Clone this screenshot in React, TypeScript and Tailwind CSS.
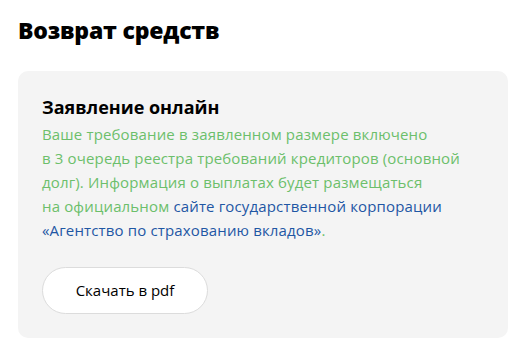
export default function App() {
  return (
    <div className="min-h-screen bg-white px-[18px] pt-[14px] pb-[13px] font-['Open_Sans',sans-serif] text-black">
      <h2 className="text-[23px] font-extrabold leading-[32px] tracking-[-0.2px]">
        Возврат средств
      </h2>

      <div className="mt-[25px] w-[490px] rounded-[10px] bg-[#f4f4f4] px-6 pt-[23px] pb-[24px]">
        <h3 className="text-[18px] font-bold leading-[26px]">
          Заявление онлайн
        </h3>
        <p className="mt-[2px] text-[15px] leading-[24px] tracking-[0.15px] text-[#6cbf6b]">
          Ваше требование в заявленном размере включено
          <br />в 3 очередь реестра требований кредиторов (основной
          <br />
          долг). Информация о выплатах будет размещаться
          <br />
          на официальном{" "}
          <a href="#" className="text-[#1f57a4]">
            сайте государственной корпорации
            <br />
            «Агентство по страхованию вкладов»
          </a>
          .
        </p>

        <button className="mt-[25px] flex h-[47px] w-[166px] items-center justify-center rounded-full border border-[#dcdcdc] bg-white text-[15px] text-black">
          Скачать в pdf
        </button>
      </div>
    </div>
  );
}
